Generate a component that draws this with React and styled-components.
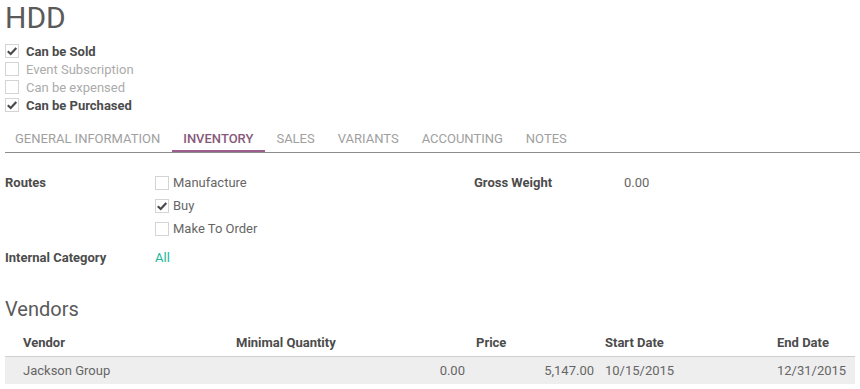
import React from 'react'
import styled, { createGlobalStyle } from 'styled-components'

const GlobalStyle = createGlobalStyle`
  body {
    margin: 0;
    background: #fff;
    font-family: Roboto, "Liberation Sans", sans-serif;
    font-size: 13px;
    color: #4c4c4c;
  }
`

const Check = ({ checked }) => (
  <CheckBox>
    {checked && (
      <svg width="12" height="12" viewBox="0 0 12 12">
        <path d="M1.8 6.2 L4.7 9 L10.3 3.1" fill="none" stroke="#4a4a4a" strokeWidth="2.2" />
      </svg>
    )}
  </CheckBox>
)

const flags = [
  { label: 'Can be Sold', checked: true },
  { label: 'Event Subscription', checked: false },
  { label: 'Can be expensed', checked: false },
  { label: 'Can be Purchased', checked: true },
]

const tabs = ['General Information', 'Inventory', 'Sales', 'Variants', 'Accounting', 'Notes']

const routes = [
  { label: 'Manufacture', checked: false },
  { label: 'Buy', checked: true },
  { label: 'Make To Order', checked: false },
]

function App() {
  return (
    <Sheet>
      <GlobalStyle />
      <Title>HDD</Title>
      <FlagList>
        {flags.map((f) => (
          <CheckRow key={f.label} gap={7} height={18}>
            <Check checked={f.checked} />
            <FlagLabel active={f.checked}>{f.label}</FlagLabel>
          </CheckRow>
        ))}
      </FlagList>

      <TabBar>
        {tabs.map((t) => (
          <Tab key={t} active={t === 'Inventory'}>{t}</Tab>
        ))}
      </TabBar>

      <Fields>
        <Group>
          <Label>Routes</Label>
          <div>
            {routes.map((r) => (
              <CheckRow key={r.label} gap={4} height={23}>
                <Check checked={r.checked} />
                <span>{r.label}</span>
              </CheckRow>
            ))}
          </div>
          <Label>Internal Category</Label>
          <Link>All</Link>
        </Group>
        <Group>
          <Label>Gross Weight</Label>
          <Value>0.00</Value>
        </Group>
      </Fields>

      <SectionTitle>Vendors</SectionTitle>
      <Table>
        <colgroup>
          <col style={{ width: 223 }} />
          <col style={{ width: 240 }} />
          <col style={{ width: 129 }} />
          <col style={{ width: 172 }} />
          <col />
        </colgroup>
        <thead>
          <tr>
            <Th>Vendor</Th>
            <Th>Minimal Quantity</Th>
            <Th>Price</Th>
            <Th>Start Date</Th>
            <Th>End Date</Th>
          </tr>
        </thead>
        <tbody>
          <tr>
            <Td>Jackson Group</Td>
            <Td numeric>0.00</Td>
            <Td numeric>5,147.00</Td>
            <Td>10/15/2015</Td>
            <Td>12/31/2015</Td>
          </tr>
        </tbody>
      </Table>
    </Sheet>
  )
}

const Sheet = styled.div`
  padding: 0 0 0 5px;
  width: 855px;
`

const Title = styled.h1`
  margin: 0;
  font-size: 30px;
  line-height: 36px;
  font-weight: 400;
  color: #5a5a5a;
`

const FlagList = styled.div`
  margin-top: 6px;
`

const CheckRow = styled.div`
  display: flex;
  align-items: center;
  gap: ${(p) => p.gap}px;
  height: ${(p) => p.height}px;
  color: #666;
`

const CheckBox = styled.span`
  width: 12px;
  height: 12px;
  border: 1px solid #d4d4d4;
  background: #fff;
  display: flex;
  align-items: center;
  justify-content: center;
  flex: none;
`

const FlagLabel = styled.span`
  font-weight: ${(p) => (p.active ? 700 : 400)};
  color: ${(p) => (p.active ? '#4c4c4c' : '#ababab')};
`

const TabBar = styled.div`
  display: flex;
  margin-top: 10px;
  border-bottom: 1px solid #8c8c8c;
`

const Tab = styled.div`
  padding: 2px 11.5px 0;
  height: 28px;
  box-sizing: border-box;
  line-height: 26px;
  text-transform: uppercase;
  font-size: 13px;
  font-weight: ${(p) => (p.active ? 500 : 400)};
  color: ${(p) => (p.active ? '#875a7b' : '#a0a0a0')};
  box-shadow: ${(p) => (p.active ? 'inset 0 -2px 0 #9c5e8e' : 'none')};
  &:first-child {
    padding-left: 10px;
  }
`

const Fields = styled.div`
  display: grid;
  grid-template-columns: 469px 1fr;
  margin-top: 18px;
`

const Group = styled.div`
  display: grid;
  grid-template-columns: 150px 1fr;
  row-gap: 6px;
  align-content: start;
  align-items: start;
`

const Label = styled.div`
  font-weight: 700;
  line-height: 23px;
  color: #4c4c4c;
`

const Value = styled.div`
  line-height: 23px;
  color: #666;
`

const Link = styled(Value)`
  color: #21b799;
`

const SectionTitle = styled.h2`
  margin: 28px 0 8px;
  font-size: 20px;
  line-height: 24px;
  font-weight: 400;
  color: #5a5a5a;
`

const Table = styled.table`
  width: 850px;
  border-collapse: collapse;
  table-layout: fixed;
`

const Th = styled.th`
  box-sizing: border-box;
  height: 27px;
  padding: 0 0 0 8px;
  text-align: left;
  font-weight: 700;
  color: #4c4c4c;
  border-bottom: 1px solid #cfcfcf;
  &:first-child { padding-left: 18px; }
`

const Td = styled.td`
  box-sizing: border-box;
  height: 28px;
  padding: ${(p) => (p.numeric ? '1px 3px 0 0' : '1px 0 0 8px')};
  text-align: ${(p) => (p.numeric ? 'right' : 'left')};
  background: #eeeeee;
  color: #666;
  white-space: nowrap;
  &:first-child { padding-left: 18px; }
`

export default App
